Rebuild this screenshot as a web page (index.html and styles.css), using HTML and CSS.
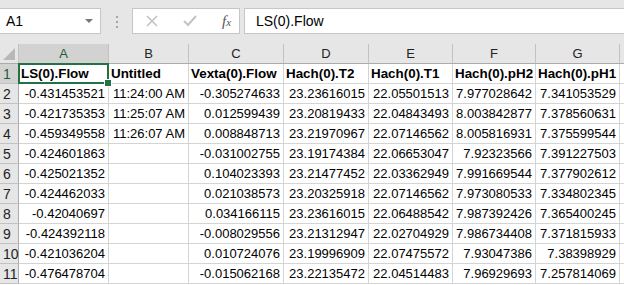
FILE: index.html
```html
<!DOCTYPE html>
<html lang="en">
<head>
    <meta charset="UTF-8">
    <title>Book1 - Excel</title>
    <link rel="stylesheet" href="styles.css">
</head>
<body>
    <div class="formula-bar">
        <div class="name-box">
            <span>A1</span>
            <span class="caret"></span>
        </div>
        <div class="grip"><i></i><i></i><i></i></div>
        <div class="fx-buttons">
            <svg width="14" height="14" viewBox="0 0 14 14"><path d="M2 2 L12 12 M12 2 L2 12" stroke="#c3c3c3" stroke-width="1.6" fill="none"/></svg>
            <svg width="16" height="14" viewBox="0 0 16 14"><path d="M2 7 L6 11 L14 2" stroke="#c3c3c3" stroke-width="2" fill="none"/></svg>
            <span class="fx">f<span>x</span></span>
        </div>
        <div class="formula-input">LS(0).Flow</div>
    </div>

    <div class="sheet">
        <div class="row head">
            <div class="corner"><span></span></div>
            <div class="col sel">A</div>
            <div class="col">B</div>
            <div class="col">C</div>
            <div class="col">D</div>
            <div class="col">E</div>
            <div class="col">F</div>
            <div class="col">G</div>
            <div class="col"></div>
        </div>
        <div class="row">
            <div class="rh sel">1</div>
            <div class="cell txt active">LS(0).Flow</div>
            <div class="cell txt">Untitled</div>
            <div class="cell txt">Vexta(0).Flow</div>
            <div class="cell txt">Hach(0).T2</div>
            <div class="cell txt">Hach(0).T1</div>
            <div class="cell txt">Hach(0).pH2</div>
            <div class="cell txt">Hach(0).pH1</div>
            <div class="cell"></div>
        </div>
        <div class="row">
            <div class="rh">2</div>
            <div class="cell">-0.431453521</div>
            <div class="cell">11:24:00 AM</div>
            <div class="cell">-0.305274633</div>
            <div class="cell">23.23616015</div>
            <div class="cell">22.05501513</div>
            <div class="cell">7.977028642</div>
            <div class="cell">7.341053529</div>
            <div class="cell"></div>
        </div>
        <div class="row">
            <div class="rh">3</div>
            <div class="cell">-0.421735353</div>
            <div class="cell">11:25:07 AM</div>
            <div class="cell">0.012599439</div>
            <div class="cell">23.20819433</div>
            <div class="cell">22.04843493</div>
            <div class="cell">8.003842877</div>
            <div class="cell">7.378560631</div>
            <div class="cell"></div>
        </div>
        <div class="row">
            <div class="rh">4</div>
            <div class="cell">-0.459349558</div>
            <div class="cell">11:26:07 AM</div>
            <div class="cell">0.008848713</div>
            <div class="cell">23.21970967</div>
            <div class="cell">22.07146562</div>
            <div class="cell">8.005816931</div>
            <div class="cell">7.375599544</div>
            <div class="cell"></div>
        </div>
        <div class="row">
            <div class="rh">5</div>
            <div class="cell">-0.424601863</div>
            <div class="cell"></div>
            <div class="cell">-0.031002755</div>
            <div class="cell">23.19174384</div>
            <div class="cell">22.06653047</div>
            <div class="cell">7.92323566</div>
            <div class="cell">7.391227503</div>
            <div class="cell"></div>
        </div>
        <div class="row">
            <div class="rh">6</div>
            <div class="cell">-0.425021352</div>
            <div class="cell"></div>
            <div class="cell">0.104023393</div>
            <div class="cell">23.21477452</div>
            <div class="cell">22.03362949</div>
            <div class="cell">7.991669544</div>
            <div class="cell">7.377902612</div>
            <div class="cell"></div>
        </div>
        <div class="row">
            <div class="rh">7</div>
            <div class="cell">-0.424462033</div>
            <div class="cell"></div>
            <div class="cell">0.021038573</div>
            <div class="cell">23.20325918</div>
            <div class="cell">22.07146562</div>
            <div class="cell">7.973080533</div>
            <div class="cell">7.334802345</div>
            <div class="cell"></div>
        </div>
        <div class="row">
            <div class="rh">8</div>
            <div class="cell">-0.42040697</div>
            <div class="cell"></div>
            <div class="cell">0.034166115</div>
            <div class="cell">23.23616015</div>
            <div class="cell">22.06488542</div>
            <div class="cell">7.987392426</div>
            <div class="cell">7.365400245</div>
            <div class="cell"></div>
        </div>
        <div class="row">
            <div class="rh">9</div>
            <div class="cell">-0.424392118</div>
            <div class="cell"></div>
            <div class="cell">-0.008029556</div>
            <div class="cell">23.21312947</div>
            <div class="cell">22.02704929</div>
            <div class="cell">7.986734408</div>
            <div class="cell">7.371815933</div>
            <div class="cell"></div>
        </div>
        <div class="row">
            <div class="rh">10</div>
            <div class="cell">-0.421036204</div>
            <div class="cell"></div>
            <div class="cell">0.010724076</div>
            <div class="cell">23.19996909</div>
            <div class="cell">22.07475572</div>
            <div class="cell">7.93047386</div>
            <div class="cell">7.38398929</div>
            <div class="cell"></div>
        </div>
        <div class="row">
            <div class="rh">11</div>
            <div class="cell">-0.476478704</div>
            <div class="cell"></div>
            <div class="cell">-0.015062168</div>
            <div class="cell">23.22135472</div>
            <div class="cell">22.04514483</div>
            <div class="cell">7.96929693</div>
            <div class="cell">7.257814069</div>
            <div class="cell"></div>
        </div>
    </div>
</body>
</html>
```

FILE: styles.css
```css
:root {
    --chrome: #e6e6e6;
    --header: #e6e6e6;
    --header-sel: #d2d2d2;
    --grid: #d4d4d4;
    --header-line: #c2c2c2;
    --green: #217346;
    --cols: 19px 90px 80px 95px 85px 84px 83px 84px 84px;
}

* {
    box-sizing: border-box;
}

body {
    margin: 0;
    width: 624px;
    height: 285px;
    overflow: hidden;
    background: #ffffff;
    font-family: "Liberation Sans", Arial, sans-serif;
    font-size: 13px;
    color: #000;
}

/* formula bar */
.formula-bar {
    display: flex;
    align-items: flex-start;
    height: 44px;
    padding-top: 8px;
    background: var(--chrome);
}

.name-box {
    display: flex;
    align-items: center;
    justify-content: space-between;
    width: 101px;
    height: 26px;
    padding: 0 7px 0 6px;
    background: #fff;
    border: 1px solid #c6c6c6;
    border-left: none;
    font-size: 14px;
}

.caret {
    width: 0;
    height: 0;
    border-left: 4px solid transparent;
    border-right: 4px solid transparent;
    border-top: 4px solid #777;
}

.grip {
    display: flex;
    flex-direction: column;
    gap: 3px;
    width: 31px;
    padding: 8px 0 0 15px;
}

.grip i {
    display: block;
    width: 2px;
    height: 2px;
    background: #a6a6a6;
}

.fx-buttons {
    display: flex;
    align-items: center;
    width: 108px;
    height: 26px;
    padding-left: 12px;
    gap: 23px;
    background: #fff;
    border: 1px solid #c6c6c6;
}

.fx {
    margin-left: 1px;
    font-family: "Liberation Serif", serif;
    font-style: italic;
    font-size: 15px;
    color: #555;
}

.fx span {
    font-size: 11px;
}

.formula-input {
    flex: 1;
    height: 26px;
    margin-left: 4px;
    padding: 4px 11px;
    background: #fff;
    border: 1px solid #c6c6c6;
    border-right: none;
    font-size: 14px;
}

/* grid */
.sheet {
    width: 624px;
    overflow: hidden;
}

.row {
    display: grid;
    grid-template-columns: var(--cols);
    height: 20px;
}

.head {
    height: 20px;
    background: var(--header);
}

.corner {
    position: relative;
    border-right: 1px solid var(--header-line);
    border-bottom: 1px solid #ababab;
}

.corner span {
    position: absolute;
    right: 3px;
    bottom: 3px;
    width: 0;
    height: 0;
    border-left: 12px solid transparent;
    border-bottom: 12px solid #b8b8b8;
}

.col {
    display: flex;
    align-items: center;
    justify-content: center;
    border-right: 1px solid var(--header-line);
    border-bottom: 1px solid #ababab;
    color: #222;
}

.col.sel {
    background: var(--header-sel);
    color: #1c5c38;
}

.rh {
    display: flex;
    align-items: center;
    padding-left: 3px;
    background: var(--header);
    border-right: 1px solid #ababab;
    border-bottom: 1px solid var(--header-line);
    color: #222;
    font-size: 14px;
}

.rh.sel {
    background: var(--header-sel);
    color: #1c5c38;
}

.cell {
    display: flex;
    align-items: center;
    justify-content: flex-end;
    padding: 0 3px 0 2px;
    border-right: 1px solid var(--grid);
    border-bottom: 1px solid var(--grid);
    white-space: nowrap;
    overflow: hidden;
}

.cell.txt {
    justify-content: flex-start;
    font-weight: bold;
    font-size: 13.4px;
}

.cell.active {
    position: relative;
    overflow: visible;
}

.cell.active::before {
    content: "";
    position: absolute;
    left: -1px;
    top: -1px;
    right: -1px;
    bottom: -1px;
    border: 2px solid var(--green);
}

.cell.active::after {
    content: "";
    position: absolute;
    right: -4px;
    bottom: -4px;
    width: 6px;
    height: 6px;
    background: var(--green);
    border: 1px solid #fff;
}
```
